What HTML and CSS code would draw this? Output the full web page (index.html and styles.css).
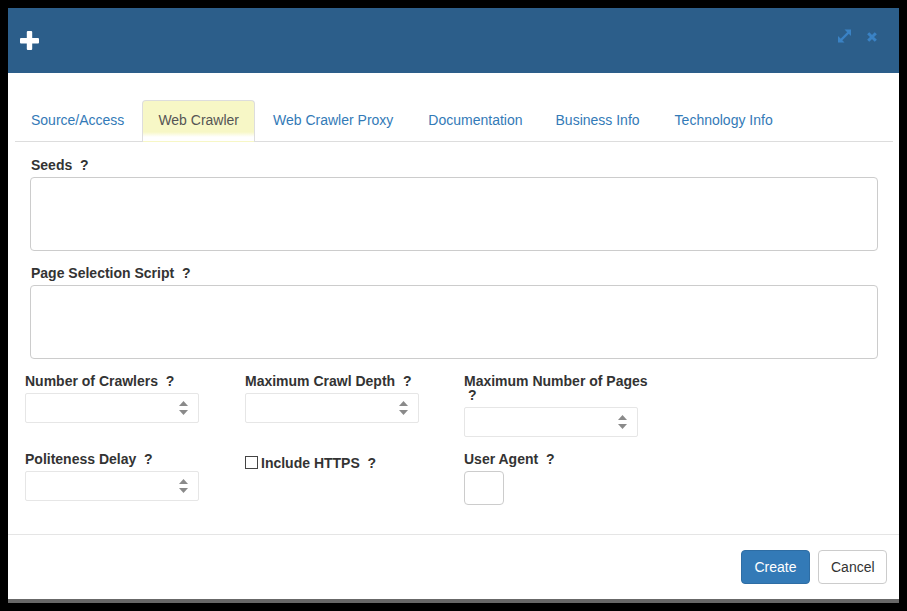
FILE: index.html
```html
<!DOCTYPE html>
<html>
<head>
<meta charset="utf-8">
<link rel="stylesheet" href="styles.css">
</head>
<body>
<div class="dialog">
  <div class="dlg-header">
    <svg class="plus" width="19" height="19" viewBox="0 0 19 19"><rect x="6.8" y="0" width="5.4" height="19" rx="1" fill="#fff"/><rect x="0" y="7" width="19" height="5.4" rx="1" fill="#fff"/></svg>
    <div class="hdr-tools">
      <svg class="expand" width="13" height="14" viewBox="0 0 13 14"><path d="M2.5 11.5 L10.5 3.5" stroke="#3a82c4" stroke-width="2.4"/><polygon points="13,0.5 13,7 6.5,0.5" fill="#3a82c4"/><polygon points="0,13.5 0,7 6.5,13.5" fill="#3a82c4"/></svg>
      <svg class="close" width="10" height="10" viewBox="0 0 10 10"><path d="M1.2 1.2 L8.8 8.8 M8.8 1.2 L1.2 8.8" stroke="#3a82c4" stroke-width="3"/></svg>
    </div>
  </div>
  <div class="dlg-body">
    <ul class="tabs">
      <li><a>Source/Access</a></li>
      <li class="active"><a>Web Crawler</a></li>
      <li><a>Web Crawler Proxy</a></li>
      <li class="nudge"><a>Documentation</a></li>
      <li><a>Business Info</a></li>
      <li class="push"><a>Technology Info</a></li>
    </ul>
    <div class="pane">
      <div class="group">
        <div class="lbl">Seeds &nbsp;?</div>
        <div class="textarea"></div>
      </div>
      <div class="group">
        <div class="lbl">Page Selection Script &nbsp;?</div>
        <div class="textarea"></div>
      </div>
      <div class="fields">
        <div class="field">
          <div class="lbl">Number of Crawlers &nbsp;?</div>
          <div class="numbox"><svg class="spin" width="9" height="15" viewBox="0 0 9 15"><polygon points="4.5,0 9,5 0,5" fill="#8a8a8a"/><polygon points="0,9 9,9 4.5,14" fill="#8a8a8a"/></svg></div>
        </div>
        <div class="field">
          <div class="lbl">Maximum Crawl Depth &nbsp;?</div>
          <div class="numbox"><svg class="spin" width="9" height="15" viewBox="0 0 9 15"><polygon points="4.5,0 9,5 0,5" fill="#8a8a8a"/><polygon points="0,9 9,9 4.5,14" fill="#8a8a8a"/></svg></div>
        </div>
        <div class="field">
          <div class="lbl">Maximum Number of Pages &nbsp;?</div>
          <div class="numbox"><svg class="spin" width="9" height="15" viewBox="0 0 9 15"><polygon points="4.5,0 9,5 0,5" fill="#8a8a8a"/><polygon points="0,9 9,9 4.5,14" fill="#8a8a8a"/></svg></div>
        </div>
        <div class="field">
          <div class="lbl">Politeness Delay &nbsp;?</div>
          <div class="numbox"><svg class="spin" width="9" height="15" viewBox="0 0 9 15"><polygon points="4.5,0 9,5 0,5" fill="#8a8a8a"/><polygon points="0,9 9,9 4.5,14" fill="#8a8a8a"/></svg></div>
        </div>
        <div class="field">
          <div class="lbl check"><span class="box"></span>Include HTTPS &nbsp;?</div>
        </div>
        <div class="field">
          <div class="lbl">User Agent &nbsp;?</div>
          <div class="smallbox"></div>
        </div>
      </div>
    </div>
  </div>
  <div class="dlg-footer">
    <button class="btn primary">Create</button>
    <button class="btn">Cancel</button>
  </div>
</div>
</body>
</html>
```
FILE: styles.css
```css
html, body {
  margin: 0;
  padding: 0;
  background: #000;
}
body {
  padding: 8px;
  font-family: "Liberation Sans", Arial, sans-serif;
  font-size: 14px;
  color: #333;
}
.dialog {
  width: 891px;
  height: 591px;
  background: #fff;
  display: flex;
  flex-direction: column;
  box-shadow: 0 4px 0 #686868;
}
.dlg-header {
  height: 65px;
  flex: none;
  background: #2c5e8a;
  display: flex;
  align-items: center;
  padding-left: 12px;
  box-sizing: border-box;
}
.plus { display: block; }
.hdr-tools {
  margin-left: auto;
  align-self: flex-start;
  display: flex;
  align-items: flex-start;
  padding-top: 21px;
  padding-right: 22px;
  gap: 16px;
}
.hdr-tools .expand { margin-left: 2px; }
.hdr-tools .close { margin-top: 3px; }
.dlg-body {
  flex: 1;
  padding: 27px 6px 0 7px;
}
.tabs {
  list-style: none;
  margin: 0;
  padding: 0;
  display: flex;
  border-bottom: 1px solid #ddd;
  height: 41px;
}
.tabs li {
  margin-right: 2px;
  margin-bottom: -1px;
}
.tabs a {
  display: block;
  padding: 9px 15px 11px;
  line-height: 20px;
  border: 1px solid transparent;
  border-radius: 4px 4px 0 0;
  color: #337ab7;
}
.tabs li.nudge a {
  padding-left: 16px;
  padding-right: 14px;
}
.tabs li.push a {
  padding-left: 16px;
}
.tabs li.active a {
  color: #555;
  border-color: #ddd;
  border-bottom-color: transparent;
  background: linear-gradient(#f7f7c6 31px, #fcfce9 34px, #fff 36px);
}
.pane {
  padding-top: 16px;
}
.group {
  padding: 0 15px;
  margin-bottom: 15px;
}
.group .lbl {
  padding-left: 1px;
}
.lbl {
  font-weight: bold;
  line-height: 14px;
  margin-bottom: 5px;
  color: #333;
}
.textarea {
  height: 74px;
  border: 1px solid #ccc;
  border-radius: 4px;
  box-sizing: border-box;
}
.fields {
  padding: 0 10px;
  display: grid;
  grid-template-columns: 195px 194px 195px;
  column-gap: 25px;
  row-gap: 15px;
  align-items: start;
}
.numbox {
  width: 174px;
  height: 30px;
  border: 1px solid #e6e6e6;
  border-radius: 2px;
  box-sizing: border-box;
  display: flex;
  align-items: center;
  justify-content: flex-end;
  padding-right: 10px;
}
.spin { display: block; }
.check {
  padding-top: 4px;
  display: flex;
  align-items: center;
  white-space: pre;
}
.box {
  width: 11px;
  height: 11px;
  border: 1px solid #444;
  margin-right: 3px;
  margin-top: -2px;
  background: #fff;
}
.smallbox {
  width: 40px;
  height: 34px;
  border: 1px solid #ccc;
  border-radius: 4px;
  box-sizing: border-box;
}
.dlg-footer {
  flex: none;
  height: 65px;
  box-sizing: border-box;
  border-top: 1px solid #e5e5e5;
  display: flex;
  justify-content: flex-end;
  align-items: flex-start;
  padding: 15px 12px 0 0;
  gap: 8px;
}
.btn {
  font-family: "Liberation Sans", Arial, sans-serif;
  font-size: 14px;
  line-height: 20px;
  padding: 6px 12px;
  border: 1px solid #ccc;
  border-radius: 4px;
  background: #fff;
  color: #333;
  height: 34px;
  width: 69px;
  box-sizing: border-box;
}
.btn.primary {
  background: #337ab7;
  border-color: #2e6da4;
  color: #fff;
}
```
